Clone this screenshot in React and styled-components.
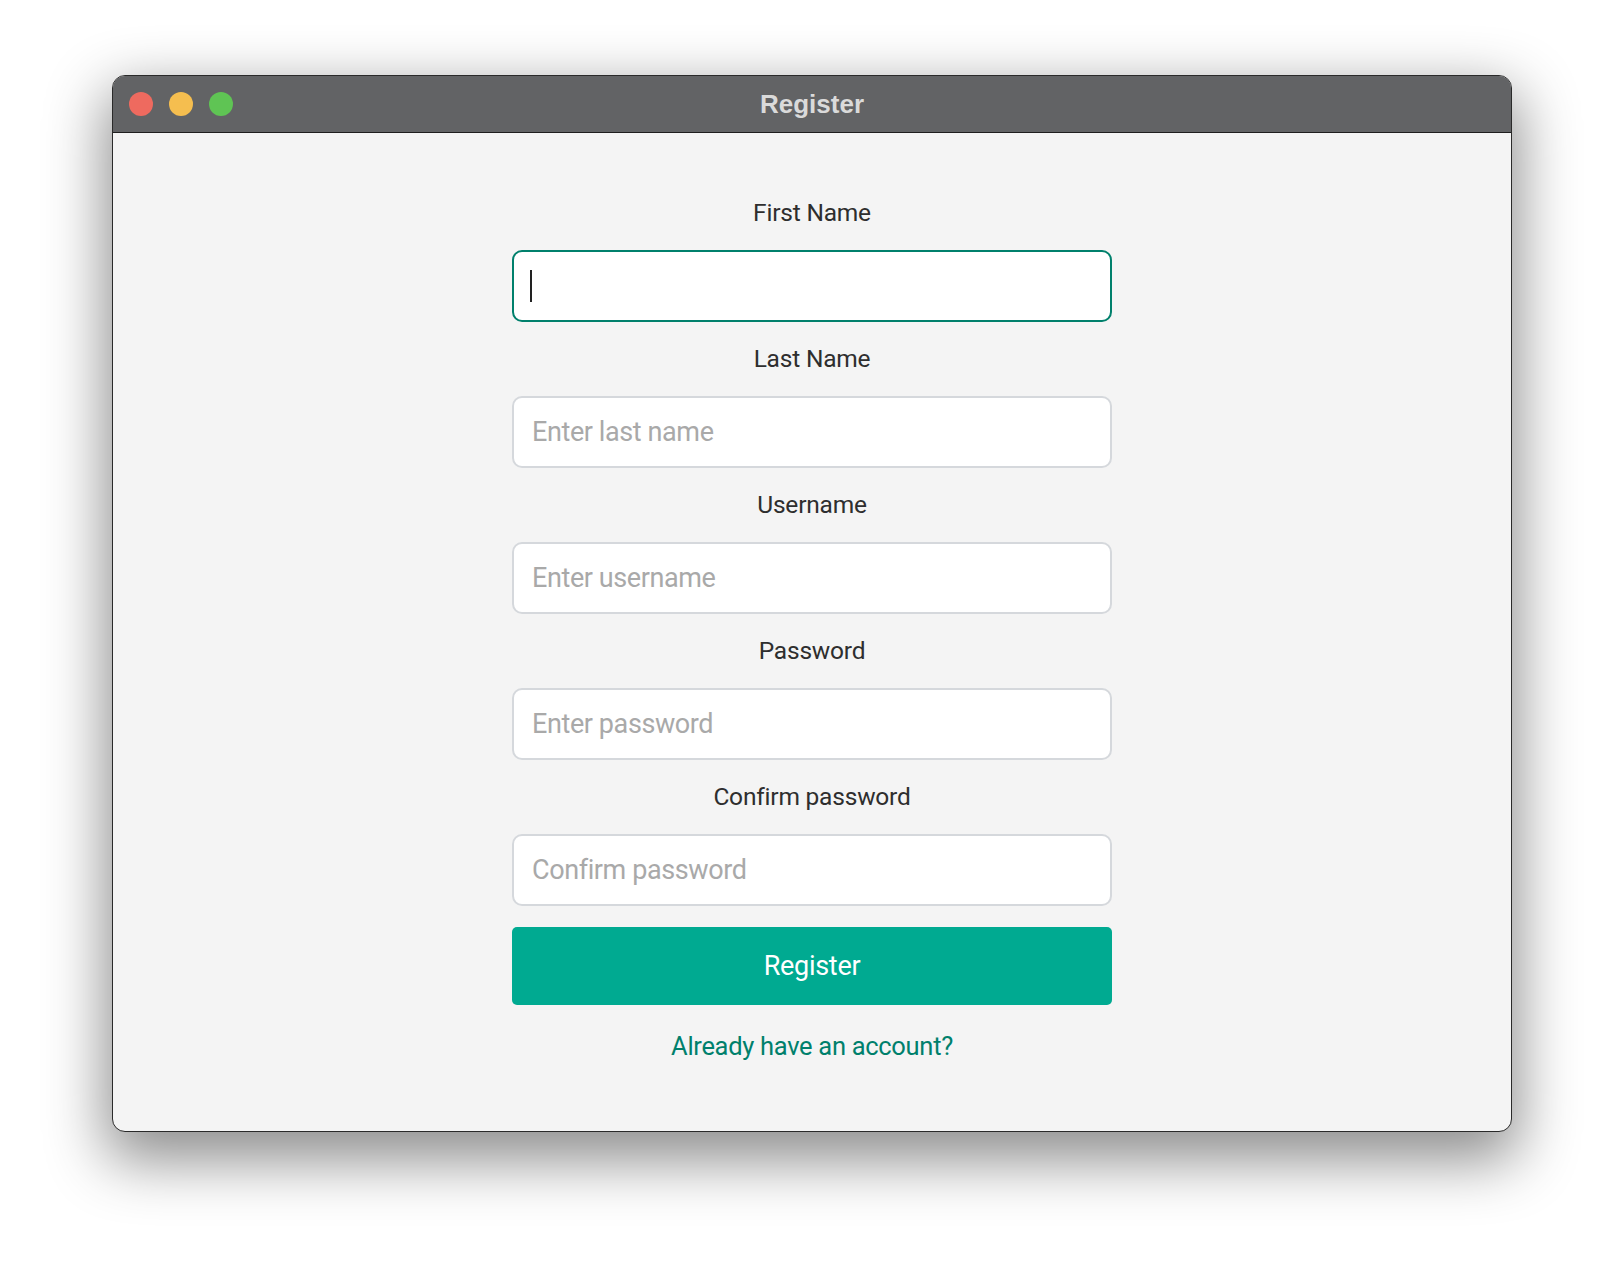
import styled, { createGlobalStyle } from 'styled-components'

const GlobalStyle = createGlobalStyle`
  html, body {
    margin: 0;
    padding: 0;
    background: #ffffff;
  }
  body {
    font-family: Roboto, "Liberation Sans", sans-serif;
  }
`

const Page = styled.div`
  width: 1624px;
  height: 1280px;
  display: flex;
  justify-content: center;
  padding-top: 75px;
  box-sizing: border-box;
`

const Window = styled.div`
  width: 1400px;
  height: 1057px;
  display: flex;
  flex-direction: column;
  border-radius: 13px;
  overflow: hidden;
  border: 1px solid #2a2a2a;
  box-sizing: border-box;
  background: #f4f4f4;
  box-shadow: 0 22px 60px 6px rgba(0, 0, 0, 0.45);
`

const TitleBar = styled.div`
  height: 57px;
  flex-shrink: 0;
  background: #626365;
  border-bottom: 1px solid #1e1e1e;
  box-sizing: border-box;
  display: flex;
  align-items: center;
  position: relative;
`

const Lights = styled.div`
  display: flex;
  gap: 16px;
  padding-left: 16px;
`

const Light = styled.span`
  width: 24px;
  height: 24px;
  border-radius: 50%;
  background: ${p => p.color};
`

const Title = styled.div`
  position: absolute;
  left: 0;
  right: 0;
  text-align: center;
  font-family: "Liberation Sans", Arial, sans-serif;
  font-weight: bold;
  font-size: 26px;
  color: #dadada;
`

const Body = styled.div`
  flex: 1;
  display: flex;
  justify-content: center;
  padding-top: 65px;
`

const Form = styled.form`
  width: 600px;
  display: flex;
  flex-direction: column;
`

const Field = styled.div`
  display: flex;
  flex-direction: column;
  margin-bottom: 22px;
`

const Label = styled.label`
  height: 30px;
  line-height: 30px;
  text-align: center;
  font-size: 24.5px;
  color: #2e2e2e;
  margin-bottom: 22px;
  letter-spacing: -0.2px;
`

const InputWrap = styled.div`
  position: relative;
`

const Input = styled.input`
  width: 100%;
  height: 72px;
  box-sizing: border-box;
  border-radius: 10px;
  background: #ffffff;
  border: ${p => (p.$focused ? '2px solid #00806c' : '2px solid #d5d8dc')};
  padding: 0 18px;
  font-family: Roboto, "Liberation Sans", sans-serif;
  font-size: 27px;
  letter-spacing: -0.4px;
  color: #2e2e2e;
  outline: none;
  caret-color: transparent;

  &::placeholder {
    color: #a9a9a9;
  }
`

const Caret = styled.span`
  position: absolute;
  left: 18px;
  top: 20px;
  width: 2px;
  height: 32px;
  background: #222;
`

const Button = styled.button`
  margin-top: -1px;
  height: 78px;
  border: none;
  border-radius: 5px;
  background: #00aa91;
  color: #ffffff;
  font-family: Roboto, "Liberation Sans", sans-serif;
  font-size: 27px;
  letter-spacing: -0.3px;
`

const LinkText = styled.a`
  margin-top: 26px;
  height: 30px;
  line-height: 30px;
  text-align: center;
  font-size: 25.5px;
  color: #00806c;
  letter-spacing: -0.3px;
  text-decoration: none;
`

const fields = [
  { label: 'First Name', placeholder: '', focused: true },
  { label: 'Last Name', placeholder: 'Enter last name' },
  { label: 'Username', placeholder: 'Enter username' },
  { label: 'Password', placeholder: 'Enter password', type: 'password' },
  { label: 'Confirm password', placeholder: 'Confirm password', type: 'password' }
]

export default function App () {
  return (
    <>
      <GlobalStyle />
      <Page>
        <Window>
          <TitleBar>
            <Lights>
              <Light color='#ee6a5f' />
              <Light color='#f5be4f' />
              <Light color='#5fc454' />
            </Lights>
            <Title>Register</Title>
          </TitleBar>
          <Body>
            <Form onSubmit={e => e.preventDefault()}>
              {fields.map(f => (
                <Field key={f.label}>
                  <Label>{f.label}</Label>
                  <InputWrap>
                    <Input
                      type={f.type || 'text'}
                      placeholder={f.placeholder}
                      $focused={f.focused}
                    />
                    {f.focused && <Caret />}
                  </InputWrap>
                </Field>
              ))}
              <Button type='submit'>Register</Button>
              <LinkText href='#'>Already have an account?</LinkText>
            </Form>
          </Body>
        </Window>
      </Page>
    </>
  )
}
